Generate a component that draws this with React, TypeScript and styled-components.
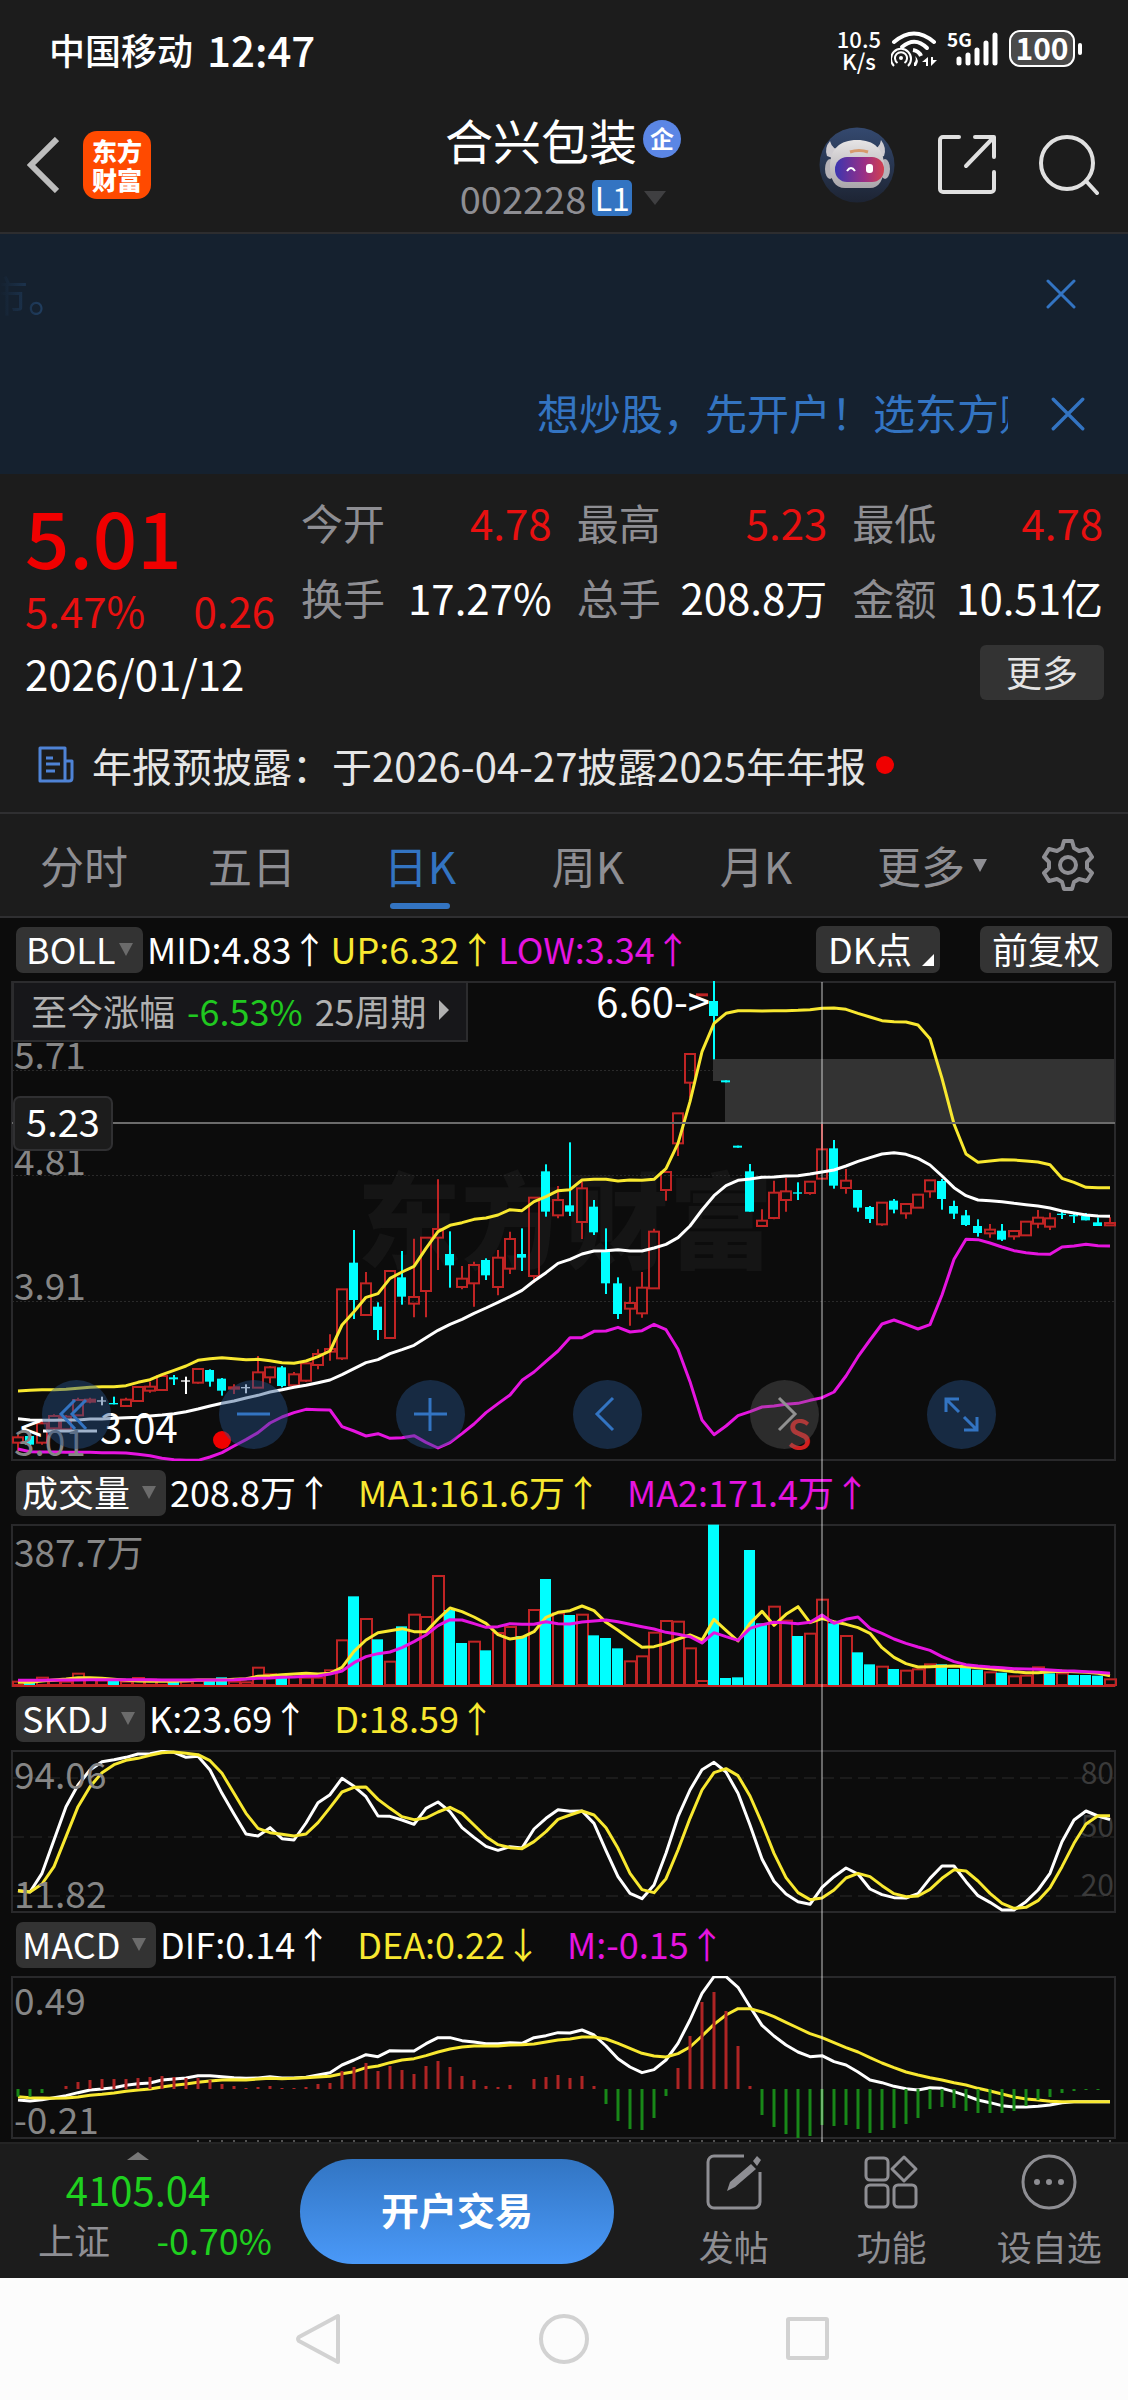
import React from "react";
import styled, { createGlobalStyle, css } from "styled-components";

const RED = "#e81010";
const BLUE = "#3374c2";
const YELLOW = "#f8e830";
const MAGENTA = "#e614e0";
const CYAN = "#00ffff";
const CANDLE_RED = "#c02424";
const GREY = "#8e8e93";
const FONT = `"Noto Sans CJK SC", "Noto Sans", sans-serif`;

const GlobalStyle = createGlobalStyle`
  * { box-sizing: border-box; }
  body { margin: 0; background: #1c1c1c; font-family: ${FONT}; color: #fff; }
  button, select, input { font: inherit; color: inherit; border: 0; padding: 0; background: none; }
  button { cursor: pointer; }
  h1, p, dl, dt, dd { margin: 0; font-weight: inherit; }
  svg { display: block; flex: none; }
`;

/* ---------- status bar ---------- */

const StatusBar = styled.div`
  display: flex;
  align-items: center;
  justify-content: space-between;
  height: 97px;
  padding: 0 46px 0 49px;
`;
const Carrier = styled.div`
  display: flex;
  align-items: center;
  gap: 14px;
  font-size: 36px;
  font-weight: 500;
  line-height: 48px;
`;
const Clock = styled.time`
  font-size: 42px;
`;
const StatusIcons = styled.div`
  display: flex;
  align-items: center;
  gap: 10px;
`;
const Speed = styled.div`
  font-size: 22px;
  font-weight: 500;
  line-height: 22px;
  text-align: center;
`;
const Battery = styled.div`
  display: flex;
  align-items: center;
  gap: 3px;
  &::after {
    content: "";
    width: 4px;
    height: 12px;
    border-radius: 2px;
    background: #fff;
  }
`;
const BatteryLevel = styled.div`
  width: 66px;
  height: 37px;
  border: 2px solid #fff;
  border-radius: 11px;
  background: #4a4a4a;
  font-size: 30px;
  font-weight: 700;
  line-height: 30px;
  text-align: center;
`;

/* ---------- header ---------- */

const Header = styled.header`
  display: grid;
  grid-template-columns: 1fr auto 1fr;
  align-items: center;
  height: 137px;
  padding: 0 29px 0 27px;
  border-bottom: 2px solid #2d2d2f;
`;
const HeaderLeft = styled.div`
  display: flex;
  align-items: center;
  gap: 24px;
`;
const HeaderRight = styled.div`
  display: flex;
  align-items: center;
  justify-content: flex-end;
  gap: 43px;
`;
const Logo = styled.button`
  width: 68px;
  height: 68px;
  border-radius: 14px;
  background: #ff4a00;
  color: #fff;
  font-size: 25px;
  font-weight: 900;
  line-height: 29px;
`;
const Stock = styled.div`
  display: flex;
  flex-direction: column;
  align-items: center;
  gap: 8px;
`;
const StockName = styled.h1`
  display: flex;
  align-items: center;
  gap: 6px;
  font-size: 48px;
  line-height: 58px;
`;
const FirmBadge = styled.span`
  width: 38px;
  height: 38px;
  border-radius: 50%;
  background: #5b86e5;
  font-size: 24px;
  font-weight: 700;
  line-height: 36px;
  text-align: center;
`;
const StockCode = styled.button`
  display: flex;
  align-items: center;
  gap: 6px;
  color: ${GREY};
  font-size: 38px;
  line-height: 44px;
  svg { margin-left: 6px; }
`;
const Level = styled.span`
  width: 40px;
  height: 36px;
  border-radius: 5px;
  background: ${BLUE};
  color: #fff;
  font-size: 32px;
  line-height: 34px;
  text-align: center;
`;

/* ---------- banner ---------- */

const Banner = styled.section`
  background: #15212f;
  color: ${BLUE};
`;
const BannerRow = styled.div<{ $inset: number }>`
  display: flex;
  align-items: center;
  justify-content: space-between;
  height: 120px;
  padding-right: ${(p) => p.$inset}px;
`;
const FadedText = styled.span`
  display: flex;
  justify-content: flex-end;
  width: 70px;
  overflow: hidden;
  white-space: nowrap;
  font-size: 42px;
  line-height: 60px;
  color: transparent;
  background: linear-gradient(90deg, #15212f, #27507f);
  background-clip: text;
  -webkit-background-clip: text;
`;
const Marquee = styled.a`
  width: 471px;
  margin-left: auto;
  margin-right: 43px;
  overflow: hidden;
  white-space: nowrap;
  color: inherit;
  text-decoration: none;
  font-size: 42px;
  line-height: 60px;
  padding-bottom: 4px;
`;

/* ---------- quote ---------- */

const Quote = styled.section`
  display: grid;
  grid-template-columns: 250px 1fr;
  column-gap: 26px;
  padding: 10px 25px 0;
  font-size: 42px;
`;
const Price = styled.p`
  color: #f00000;
  font-size: 78px;
  font-weight: 500;
  line-height: 102px;
`;
const Change = styled.p`
  display: flex;
  justify-content: space-between;
  color: ${RED};
  line-height: 48px;
`;
const Stats = styled.dl`
  display: grid;
  grid-template-columns: repeat(3, 1fr);
  column-gap: 25px;
  line-height: 75px;
`;
const Stat = styled.div`
  display: flex;
  justify-content: space-between;
  white-space: nowrap;
`;
const StatName = styled.dt`
  color: ${GREY};
`;
const StatValue = styled.dd<{ $up?: boolean }>`
  color: ${(p) => (p.$up ? RED : "#fff")};
`;
const DateRow = styled.div`
  display: flex;
  align-items: center;
  justify-content: space-between;
  padding: 11px 24px 0 25px;
  font-size: 42px;
  line-height: 54px;
`;
const MoreButton = styled.button`
  width: 124px;
  height: 55px;
  padding-bottom: 4px;
  border-radius: 6px;
  background: #333;
  color: #e4e4e4;
  font-size: 36px;
  line-height: 48px;
`;
const Notice = styled.a`
  display: flex;
  align-items: center;
  height: 114px;
  padding: 17px 38px 0;
  color: #e6e6e6;
  text-decoration: none;
  font-size: 40px;
  line-height: 52px;
  border-bottom: 2px solid #2f2f31;
  white-space: nowrap;
`;
const NoticeText = styled.span`
  margin: 0 10px 0 18px;
`;
const Dot = styled.span`
  width: 18px;
  height: 18px;
  border-radius: 50%;
  background: #f00000;
`;

/* ---------- tabs ---------- */

const Tabs = styled.nav`
  display: grid;
  grid-template-columns: repeat(6, 168fr) 120fr;
  height: 104px;
  border-bottom: 2px solid #2f2f31;
`;
const Tab = styled.button<{ $active?: boolean; $menu?: boolean }>`
  position: relative;
  display: flex;
  align-items: center;
  justify-content: center;
  gap: 8px;
  padding-left: ${(p) => (p.$menu ? 16 : 0)}px;
  color: ${(p) => (p.$active ? BLUE : GREY)};
  font-size: 44px;
  line-height: 60px;
  ${(p) =>
    p.$active &&
    css`
      &::after {
        content: "";
        position: absolute;
        bottom: 7px;
        width: 60px;
        height: 6px;
        border-radius: 3px;
        background: ${BLUE};
      }
    `}
`;

/* ---------- charts ---------- */

const Charts = styled.main`
  position: relative;
  background: #0c0c0c;
`;
const Crosshair = styled.div`
  position: absolute;
  top: 64px;
  bottom: 0;
  left: 72.75%;
  width: 2px;
  background: rgba(255, 255, 255, 0.38);
  pointer-events: none;
`;
const Legend = styled.div`
  display: flex;
  align-items: center;
  height: 63px;
  padding: 0 16px;
  font-size: 36px;
  line-height: 42px;
  white-space: nowrap;
`;
const Picker = styled.label<{ $tight?: boolean }>`
  position: relative;
  display: flex;
  align-items: center;
  margin-right: 4px;
  select {
    appearance: none;
    height: 46px;
    padding: ${(p) => (p.$tight ? "0 27px 4px 10px" : "0 35px 4px 6px")};
    border-radius: 7px;
    background: #333;
  }
  svg {
    position: absolute;
    right: 10px;
    pointer-events: none;
  }
`;
const Reading = styled.span<{ $color: string; $gap: number }>`
  color: ${(p) => p.$color};
  margin-right: ${(p) => p.$gap}px;
  padding-bottom: 4px;
`;
const LegendTools = styled.div`
  display: flex;
  gap: 40px;
  margin-left: auto;
`;
const ToolButton = styled.button`
  display: flex;
  align-items: center;
  justify-content: center;
  height: 47px;
  padding: 0 12px 4px;
  gap: 10px;
  border-radius: 7px;
  background: #333;
  svg { align-self: flex-end; margin: 0 -6px 3px 0; }
`;
const Plot = styled.div`
  position: relative;
`;
const Canvas = styled.svg`
  width: 100%;
  height: auto;
  font-family: ${FONT};
`;
const RangeNote = styled.button`
  position: absolute;
  top: 0;
  left: 12px;
  display: flex;
  align-items: center;
  gap: 12px;
  height: 61px;
  padding: 0 17px 4px;
  border: 2px solid #2c2c2e;
  background: #17171a;
  color: #b0b0b0;
  font-size: 36px;
  line-height: 48px;
  white-space: nowrap;
`;
const Fall = styled.span`
  color: #20c820;
`;
const CursorPrice = styled.output`
  position: absolute;
  top: 24%;
  left: 13px;
  width: 100px;
  height: 55px;
  border: 2px solid #303032;
  border-radius: 7px;
  background: #1c1c1c;
  font-size: 38px;
  line-height: 46px;
  text-align: center;
`;
const ControlBar = styled.div`
  position: absolute;
  left: 3.7%;
  right: 11.7%;
  bottom: 12px;
  display: flex;
  justify-content: space-between;
`;
const RoundButton = styled.button<{ $muted?: boolean }>`
  display: flex;
  align-items: center;
  justify-content: center;
  width: 69px;
  height: 69px;
  border-radius: 50%;
  background: ${(p) => (p.$muted ? "rgba(110, 110, 110, 0.33)" : "rgba(38, 82, 136, 0.44)")};
  color: ${(p) => (p.$muted ? "#919191" : BLUE)};
`;

/* ---------- bottom ---------- */

const BottomBar = styled.footer`
  display: grid;
  grid-template-columns: 300px 314px 1fr;
  height: 136px;
  border-top: 2px solid #242424;
`;
const IndexButton = styled.button`
  display: flex;
  flex-direction: column;
  align-items: center;
  padding: 8px 62px 0 38px;
  color: #1fd01f;
  font-size: 36px;
  line-height: 48px;
`;
const IndexValue = styled.span`
  font-size: 40px;
  line-height: 52px;
  padding-top: 3px;
`;
const IndexRow = styled.span`
  display: flex;
  justify-content: space-between;
  align-self: flex-start;
  width: 234px;
  margin-right: -34px;
`;
const IndexName = styled.span`
  color: ${GREY};
`;
const TradeButton = styled.button`
  align-self: center;
  height: 105px;
  padding-bottom: 4px;
  border-radius: 53px;
  background: linear-gradient(#3275c3, #4a99f8);
  font-size: 38px;
  font-weight: 700;
  line-height: 56px;
`;
const Actions = styled.div`
  display: grid;
  grid-template-columns: repeat(3, 1fr);
  padding-left: 41px;
`;
const Action = styled.button`
  display: flex;
  flex-direction: column;
  align-items: center;
  gap: 12px;
  padding-top: 10px;
  color: ${GREY};
  font-size: 35px;
  line-height: 48px;
`;
const SystemNav = styled.nav`
  display: flex;
  justify-content: center;
  gap: 192px;
  height: 122px;
  background: #fcfcfc;
`;

/* ---------- icons ---------- */

const Caret = ({ w = 14, h = 13, color = "#6b6b6b" }) => (
  <svg width={w} height={h} viewBox="0 0 14 13" preserveAspectRatio="none" fill={color}>
    <path d="M0 0h14L7 13z" />
  </svg>
);

const Cross = ({ size }: { size: number }) => (
  <svg width={size} height={size} viewBox="0 0 30 30" stroke="currentColor" strokeWidth="3" strokeLinecap="round">
    <path d="M2 2l26 26M28 2L2 28" />
  </svg>
);

const WifiIcon = () => (
  <svg width="46" height="37" viewBox="0 0 46 37" fill="none" stroke="#fff" strokeWidth="4">
    <path d="M3 12Q23-5 43 12" strokeLinecap="round" />
    <path d="M11 17Q24 6 36 18" strokeLinecap="round" />
    <path d="M22 20q6 1 8 6" />
    <circle cx="10" cy="28" r="2" fill="#fff" stroke="none" />
    <path d="M6.500 33a6 6 0 1 1 7 0M3 36a10 10 0 1 1 14 0" strokeWidth="2" />
    <path d="M24 26q5 4 1 10h-2v-3q3-3 1-7zM37 27v9h-2v-4h-4zM40 27v9l6-6h-4v-3z" fill="#fff" stroke="none" />
  </svg>
);

const SignalIcon = () => (
  <svg width="52" height="38" viewBox="0 0 52 38" stroke="#fff" strokeWidth="5" strokeLinecap="round">
    <text x="0" y="17" fontSize="19" fontWeight="700" fill="#fff" stroke="none" fontFamily={FONT}>5G</text>
    <path d="M12 29v4M21 25v8M30 20v13M39 13v20M48 5v28" />
  </svg>
);

const RobotIcon = () => (
  <svg width="76" height="76" viewBox="0 0 76 76">
    <defs>
      <linearGradient id="orb" x1="0" y1="0" x2="0" y2="1">
        <stop offset="0" stopColor="#34496f" />
        <stop offset="1" stopColor="#1d2433" />
      </linearGradient>
      <linearGradient id="visor" x1="0" y1="0" x2="1" y2="0">
        <stop offset="0" stopColor="#3a35b0" />
        <stop offset="0.6" stopColor="#9a2f86" />
        <stop offset="1" stopColor="#d2414f" />
      </linearGradient>
      <linearGradient id="shell" x1="0" y1="0" x2="0" y2="1">
        <stop offset="0" stopColor="#e6e4e5" />
        <stop offset="1" stopColor="#a9a5aa" />
      </linearGradient>
    </defs>
    <circle cx="38" cy="38" r="37.500" fill="url(#orb)" />
    <path d="M11 14q-6 7-3 15l8 3 6-8q-9-2-11-10zM62 13q6 8 3 16l-7 3-6-8q9-3 10-11z" fill="#cfccd1" />
    <ellipse cx="11" cy="42" rx="5" ry="10" fill="#b5b2b8" />
    <ellipse cx="66" cy="42" rx="5" ry="10" fill="#b5b2b8" />
    <path d="M38 13c17 0 27 9 27 26 0 14-5 22-14 22H26c-10 0-15-8-15-22 0-17 10-26 27-26z" fill="url(#shell)" />
    <rect x="16" y="30" width="49" height="25" rx="12" fill="url(#visor)" />
    <path d="M31 25q9-3 18 0" stroke="#d69a6c" strokeWidth="3" fill="none" />
    <path d="M28 44q4-6 8 0" stroke="#fff" strokeWidth="2" fill="none" />
    <rect x="47" y="37" width="7" height="9" rx="3" fill="#fff" />
  </svg>
);

const ShareIcon = () => (
  <svg width="58" height="59" viewBox="0 0 58 59" fill="none" stroke="#e0e0e0" strokeWidth="4" strokeLinecap="round" strokeLinejoin="round">
    <path d="M21 2H5a3 3 0 0 0-3 3v49a3 3 0 0 0 3 3h48a3 3 0 0 0 3-3V37M37 2h19v20M55 3L28 31" />
  </svg>
);

const SearchIcon = () => (
  <svg width="60" height="60" viewBox="0 0 60 60" fill="none" stroke="#e0e0e0" strokeWidth="4" strokeLinecap="round">
    <circle cx="28" cy="28" r="26" />
    <path d="M47 46l11 12" />
  </svg>
);

const DocIcon = () => (
  <svg width="36" height="37" viewBox="0 0 36 37" fill="none" stroke="#4f83d6" strokeWidth="3" strokeLinejoin="round">
    <path d="M2 2h25v33H2zM27 15h7v17q0 3-3 3h-6M8 12h7M8 18h14M8 25h9" />
  </svg>
);

const GearIcon = () => (
  <svg width="52" height="52" viewBox="0 0 52 52" fill="none" stroke={GREY} strokeWidth="4" strokeLinejoin="round">
    <path d="M22 2h8l2 7 5 3 8-2 5 8-5 5v6l5 5-5 8-8-2-5 3-2 7h-8l-2-7-5-3-8 2-5-8 5-5v-6l-5-5 5-8 8 2 5-3z" />
    <circle cx="26" cy="26" r="8" />
  </svg>
);

/* ---------- series: one entry per trading day, in thirds of a pixel ---------- */

// [body top, body bottom, wick top, wick bottom, kind]
type Candle = [number, number, number, number, "r" | "c" | "w"];
const candles: Candle[] = [
  [1402, 1418, 1395, 1450, "r"], [1398, 1424, 1390, 1430, "c"], [1360, 1418, 1352, 1424, "r"], [1338, 1375, 1333, 1382, "r"],
  [1340, 1378, 1335, 1384, "r"], [1290, 1336, 1283, 1336, "r"], [1289, 1295, 1283, 1300, "r"], [1291, 1295, 1280, 1306, "w"],
  [1299, 1303, 1280, 1303, "c"], [1289, 1308, 1283, 1308, "r"], [1251, 1293, 1248, 1296, "r"], [1250, 1262, 1235, 1268, "r"],
  [1218, 1260, 1218, 1260, "r"], [1222, 1228, 1215, 1245, "c"], [1231, 1235, 1220, 1272, "w"], [1197, 1238, 1195, 1241, "r"],
  [1200, 1235, 1198, 1250, "c"], [1226, 1262, 1224, 1277, "c"], [1252, 1256, 1243, 1272, "r"], [1251, 1255, 1243, 1270, "w"],
  [1207, 1253, 1158, 1253, "r"], [1192, 1222, 1188, 1240, "r"], [1192, 1248, 1188, 1252, "c"], [1213, 1246, 1206, 1248, "r"],
  [1180, 1232, 1180, 1236, "r"], [1152, 1185, 1138, 1198, "r"], [1137, 1145, 1093, 1172, "r"], [958, 1165, 958, 1170, "r"],
  [878, 990, 780, 1047, "c"], [940, 1035, 906, 1038, "r"], [1010, 1080, 997, 1110, "c"], [903, 1104, 903, 1106, "r"],
  [922, 980, 843, 1004, "c"], [981, 1001, 806, 1042, "r"], [803, 963, 803, 1042, "r"], [777, 803, 628, 900, "r"],
  [852, 886, 784, 953, "c"], [926, 951, 888, 958, "r"], [885, 940, 875, 1010, "r"], [870, 916, 865, 930, "c"],
  [863, 951, 840, 976, "r"], [807, 896, 785, 912, "r"], [852, 863, 775, 903, "c"], [683, 918, 683, 938, "r"],
  [604, 725, 583, 740, "c"], [690, 736, 648, 745, "r"], [706, 725, 517, 738, "c"], [655, 756, 635, 807, "r"],
  [710, 787, 690, 795, "c"], [843, 940, 775, 972, "c"], [940, 1032, 922, 1047, "c"], [999, 1016, 950, 1067, "r"],
  [953, 1030, 906, 1043, "r"], [785, 955, 776, 955, "r"], [606, 660, 606, 692, "r"], [430, 520, 430, 558, "r"],
  [252, 338, 252, 383, "r"], [73, 76, 73, 76, "r"], [93, 138, 33, 268, "c"], [331, 337, 331, 337, "c"],
  [527, 533, 527, 533, "c"], [604, 725, 582, 725, "c"], [752, 768, 718, 768, "r"], [668, 744, 632, 748, "r"],
  [664, 690, 623, 725, "r"], [667, 671, 637, 690, "c"], [635, 669, 635, 674, "r"], [538, 626, 460, 626, "r"],
  [535, 647, 510, 656, "c"], [632, 654, 597, 671, "r"], [660, 713, 660, 725, "c"], [711, 747, 708, 759, "c"],
  [698, 763, 698, 767, "r"], [692, 719, 687, 730, "c"], [702, 730, 702, 746, "r"], [674, 713, 674, 713, "r"],
  [631, 664, 631, 683, "r"], [633, 687, 627, 719, "c"], [708, 731, 692, 747, "c"], [736, 765, 720, 768, "c"],
  [768, 789, 748, 800, "c"], [779, 790, 762, 803, "r"], [782, 809, 762, 813, "c"], [783, 799, 783, 809, "r"],
  [755, 796, 755, 796, "r"], [743, 761, 720, 775, "r"], [745, 770, 728, 780, "r"], [731, 735, 723, 747, "c"],
  [735, 739, 731, 759, "c"], [738, 751, 729, 751, "c"], [757, 768, 742, 768, "c"], [759, 766, 742, 768, "r"],
];

const bollUp = [1263, 1261, 1259, 1259, 1258, 1255, 1252, 1250, 1250, 1247, 1237, 1229, 1214, 1201, 1188, 1171, 1166, 1163, 1166, 1169, 1168, 1172, 1178, 1180, 1173, 1160, 1143, 1065, 1025, 982, 971, 925, 906, 889, 835, 785, 766, 758, 748, 744, 735, 719, 722, 695, 680, 662, 659, 630, 628, 628, 633, 630, 631, 628, 596, 520, 395, 245, 160, 130, 122, 122, 123, 122, 122, 121, 119, 115, 114, 118, 130, 141, 152, 155, 156, 165, 206, 325, 462, 552, 577, 573, 569, 570, 573, 576, 584, 625, 637, 652, 653, 653];
const bollMid = [1346, 1350, 1351, 1351, 1350, 1350, 1347, 1347, 1345, 1343, 1342, 1338, 1335, 1331, 1325, 1317, 1308, 1300, 1293, 1284, 1276, 1266, 1259, 1252, 1246, 1238, 1230, 1214, 1196, 1178, 1169, 1151, 1139, 1126, 1103, 1081, 1063, 1048, 1030, 1014, 997, 980, 961, 933, 908, 880, 868, 852, 843, 842, 839, 843, 843, 834, 823, 803, 768, 720, 677, 647, 631, 627, 622, 621, 618, 617, 612, 606, 600, 588, 574, 563, 552, 548, 553, 565, 585, 618, 653, 677, 690, 692, 695, 700, 704, 708, 714, 723, 729, 735, 738, 739];
const bollLow = [1437, 1445, 1446, 1446, 1447, 1447, 1447, 1448, 1448, 1449, 1453, 1457, 1465, 1469, 1471, 1471, 1461, 1448, 1428, 1409, 1388, 1359, 1341, 1328, 1318, 1319, 1320, 1370, 1383, 1398, 1391, 1405, 1403, 1397, 1417, 1434, 1418, 1391, 1362, 1328, 1301, 1275, 1231, 1206, 1174, 1143, 1103, 1103, 1084, 1083, 1072, 1086, 1082, 1063, 1079, 1138, 1235, 1350, 1394, 1368, 1337, 1325, 1311, 1308, 1303, 1300, 1291, 1283, 1266, 1218, 1160, 1110, 1062, 1050, 1063, 1077, 1064, 975, 868, 808, 809, 819, 831, 842, 848, 852, 853, 831, 828, 823, 827, 828];

const volumeTops = [662, 668, 650, 660, 662, 638, 656, 658, 660, 662, 651, 656, 658, 662, 662, 660, 662, 652, 662, 664, 620, 640, 652, 648, 650, 650, 628, 538, 409, 474, 538, 602, 499, 461, 468, 345, 450, 549, 542, 571, 516, 498, 528, 447, 357, 457, 465, 461, 526, 534, 565, 601, 586, 515, 480, 482, 562, 660, 194, 654, 652, 270, 490, 437, 479, 528, 518, 416, 490, 525, 577, 613, 617, 627, 629, 625, 610, 613, 627, 621, 629, 634, 638, 646, 644, 619, 640, 637, 645, 645, 647, 655];
const volumeDown = new Set([1, 8, 13, 16, 17, 22, 28, 30, 32, 36, 37, 39, 42, 44, 46, 48, 49, 50, 58, 59, 60, 61, 62, 65, 68, 70, 71, 73, 77, 78, 79, 80, 82, 86, 88, 89, 90]);
const volMa1 = [667, 667, 663, 660, 657, 653, 653, 655, 658, 661, 663, 664, 664, 664, 662, 660, 660, 660, 658, 656, 649, 647, 644, 642, 640, 642, 640, 622, 574, 540, 518, 512, 506, 515, 515, 477, 444, 455, 471, 490, 524, 537, 532, 515, 472, 457, 452, 438, 452, 487, 511, 537, 562, 560, 550, 537, 525, 540, 478, 511, 543, 490, 454, 496, 463, 440, 488, 476, 485, 493, 503, 520, 563, 592, 611, 621, 620, 619, 618, 620, 623, 626, 631, 635, 638, 638, 635, 634, 635, 637, 640, 647];
const volMa2 = [661, 661, 661, 660, 660, 660, 659, 659, 659, 659, 659, 659, 660, 660, 660, 660, 660, 660, 659, 657, 655, 654, 652, 651, 649, 648, 642, 633, 608, 590, 581, 576, 563, 545, 525, 497, 479, 480, 491, 502, 500, 491, 493, 493, 485, 491, 492, 486, 483, 480, 485, 493, 500, 507, 517, 523, 530, 549, 518, 530, 541, 505, 494, 487, 488, 491, 487, 465, 490, 478, 471, 505, 520, 537, 550, 561, 571, 590, 605, 614, 618, 621, 623, 626, 627, 628, 630, 632, 633, 635, 637, 640];

const skdjK = [1292, 1296, 1240, 1140, 1040, 975, 930, 905, 899, 892, 882, 881, 874, 877, 892, 889, 930, 1000, 1062, 1122, 1128, 1103, 1136, 1140, 1089, 1028, 1004, 955, 979, 1010, 1068, 1069, 1080, 1093, 1045, 1026, 1055, 1103, 1132, 1159, 1171, 1160, 1164, 1107, 1075, 1049, 1054, 1053, 1090, 1172, 1250, 1300, 1316, 1275, 1180, 1070, 990, 929, 907, 936, 1000, 1095, 1197, 1264, 1302, 1325, 1333, 1282, 1250, 1224, 1242, 1287, 1304, 1313, 1314, 1301, 1255, 1218, 1218, 1265, 1307, 1327, 1350, 1350, 1325, 1290, 1240, 1145, 1080, 1053, 1068, 1079];
const skdjD = [1292, 1296, 1272, 1220, 1130, 1040, 980, 938, 914, 901, 895, 886, 878, 876, 880, 884, 902, 940, 1000, 1060, 1105, 1118, 1123, 1128, 1122, 1088, 1043, 996, 982, 981, 1018, 1045, 1070, 1079, 1074, 1056, 1042, 1060, 1095, 1130, 1154, 1163, 1166, 1145, 1115, 1078, 1065, 1053, 1065, 1103, 1165, 1240, 1289, 1298, 1256, 1170, 1075, 990, 938, 926, 947, 1008, 1090, 1180, 1253, 1298, 1319, 1314, 1290, 1254, 1240, 1250, 1277, 1301, 1310, 1308, 1288, 1255, 1229, 1233, 1263, 1300, 1330, 1345, 1342, 1322, 1283, 1220, 1150, 1092, 1067, 1067];

const macdDif = [600, 603, 599, 593, 587, 578, 570, 567, 563, 556, 551, 549, 540, 537, 534, 527, 527, 530, 533, 535, 534, 530, 534, 534, 532, 525, 518, 495, 480, 464, 470, 452, 453, 453, 431, 413, 413, 422, 426, 431, 431, 428, 430, 413, 407, 398, 399, 390, 405, 438, 476, 501, 518, 509, 480, 430, 360, 280, 230, 230, 262, 320, 376, 408, 435, 456, 470, 467, 485, 495, 516, 540, 548, 559, 566, 570, 563, 565, 575, 587, 600, 608, 617, 621, 621, 619, 615, 608, 605, 605, 605, 605];
const macdDea = [590, 593, 594, 595, 594, 591, 586, 583, 579, 574, 570, 567, 561, 556, 552, 547, 543, 540, 539, 540, 537, 535, 536, 535, 533, 531, 529, 521, 515, 503, 498, 488, 480, 476, 467, 456, 447, 441, 438, 438, 438, 435, 434, 432, 426, 420, 417, 411, 411, 417, 430, 445, 460, 468, 471, 461, 441, 408, 373, 345, 326, 326, 336, 350, 367, 384, 401, 413, 428, 443, 456, 473, 489, 503, 516, 525, 533, 540, 548, 555, 565, 573, 582, 591, 597, 600, 604, 605, 605, 605, 605, 605];
const macdBars = [590, 590, 579, 567, 558, 546, 540, 537, 537, 537, 534, 531, 528, 531, 534, 534, 540, 552, 558, 564, 561, 558, 564, 564, 561, 552, 549, 513, 501, 489, 513, 498, 510, 522, 498, 483, 501, 528, 540, 558, 561, 555, 567, 537, 531, 525, 534, 528, 558, 612, 663, 687, 690, 654, 588, 504, 408, 306, 276, 333, 438, 558, 645, 681, 702, 714, 708, 675, 678, 675, 687, 699, 690, 684, 672, 654, 627, 621, 624, 633, 639, 639, 639, 633, 618, 600, 591, 579, 573, 570, 570, 567];

const STEP = 12;
const dayX = (i: number) => 18 + STEP * i;

const Series = ({ data, top, color, width = 3 }: { data: number[]; top: number; color: string; width?: number }) => (
  <polyline
    fill="none"
    stroke={color}
    strokeWidth={width}
    strokeLinejoin="round"
    points={data.map((v, i) => `${dayX(i)},${(v - top) / 3}`).join(" ")}
  />
);

const Frame = ({ height }: { height: number }) => (
  <rect x="12" y="1" width="1103" height={height - 2} fill="none" stroke="#29292b" strokeWidth="2" />
);

const AxisLabel = ({ y, children }: { y: number; children: string }) => (
  <text x="14" y={y} fontSize="37" fill="#868686">{children}</text>
);

const PriceChart = () => {
  const y = (v: number) => (v - 33) / 3;
  return (
    <Canvas viewBox="0 0 1128 480" role="img" aria-label="日K线">
      <text x="357" y="280" fontSize="104" fontWeight="900" fill="#151515">东方财富</text>
      <g stroke="#2a2a2a" strokeDasharray="2 2">
        <path d="M12 89.500H1115M12 194.500H1115M12 320.500H1115" />
      </g>
      <path d="M713 78H1115V142H725V100H713z" fill="#333" />
      <Frame height={480} />
      {candles.map(([top, bottom, high, low, kind], i) => {
        const x = dayX(i);
        if (kind === "r") {
          const h = (bottom - top) / 3;
          return (
            <g key={i} stroke={CANDLE_RED} strokeWidth="2" fill="none">
              <path d={`M${x} ${y(high)}V${y(top)}M${x} ${y(bottom)}V${y(low)}`} />
              <rect x={x - 5} y={y(top)} width="10" height={h} />
            </g>
          );
        }
        const color = kind === "c" ? CYAN : "#fff";
        return (
          <g key={i} fill={color}>
            <rect x={x - 1} y={y(high)} width="2" height={(low - high) / 3} />
            <rect x={x - 5} y={y(top)} width="9" height={(bottom - top) / 3} />
          </g>
        );
      })}
      <Series data={bollUp} top={33} color={YELLOW} />
      <Series data={bollMid} top={33} color="#fff" />
      <Series data={bollLow} top={33} color={MAGENTA} />
      <path d="M12 142H1115" stroke="#6c6c6c" strokeWidth="2" />
      <g fontSize="40" fill="#fff">
        <text x="710" y="36" textAnchor="end">6.60-&gt;</text>
        <text x="20" y="462">&lt;</text>
        <text x="100" y="462">3.04</text>
      </g>
      <path d="M43 450H97" stroke="#fff" strokeWidth="3" />
      <AxisLabel y={88}>5.71</AxisLabel>
      <AxisLabel y={194}>4.81</AxisLabel>
      <AxisLabel y={319}>3.91</AxisLabel>
      <AxisLabel y={475}>3.01</AxisLabel>
      <circle cx="222" cy="459" r="9" fill="#f00000" />
      <text x="787" y="468" fontSize="40" fontWeight="500" fill="#d02020">S</text>
    </Canvas>
  );
};

const VolumeChart = () => (
  <Canvas viewBox="0 0 1128 163" role="img" aria-label="成交量">
    <Frame height={163} />
    <AxisLabel y={43}>387.7万</AxisLabel>
    {volumeTops.map((v, i) => {
      const top = (v - 192) / 3;
      return volumeDown.has(i) ? (
        <rect key={i} x={dayX(i) - 6} y={top} width="11" height={161 - top} fill={CYAN} />
      ) : (
        <rect key={i} x={dayX(i) - 5} y={top + 1} width="11" height={160 - top} fill="none" stroke={CANDLE_RED} strokeWidth="2" />
      );
    })}
    <path d="M12 162H1115" stroke={CANDLE_RED} strokeWidth="2" />
    <Series data={volMa1} top={192} color={YELLOW} />
    <Series data={volMa2} top={192} color={MAGENTA} />
  </Canvas>
);

const SkdjChart = () => (
  <Canvas viewBox="0 0 1128 163" role="img" aria-label="SKDJ">
    <Frame height={163} />
    <path d="M12 28H1115M12 87H1115M12 146H1115" stroke="#2b2b2b" strokeDasharray="12 6" />
    <g fontSize="30" fill="#3a3a3a" textAnchor="end">
      <text x="1114" y="34">80</text>
      <text x="1114" y="87">50</text>
      <text x="1114" y="146">20</text>
    </g>
    <Series data={skdjK} top={870} color="#fff" />
    <Series data={skdjD} top={870} color={YELLOW} />
    <AxisLabel y={39}>94.06</AxisLabel>
    <AxisLabel y={158}>11.82</AxisLabel>
  </Canvas>
);

const MacdChart = () => (
  <Canvas viewBox="0 0 1128 166" role="img" aria-label="MACD">
    <Frame height={163} />
    <Series data={macdDif} top={228} color="#fff" />
    <Series data={macdDea} top={228} color={YELLOW} />
    {macdBars.map((v, i) => (
      <path key={i} d={`M${dayX(i)} 113V${(v - 228) / 3}`} stroke={v > 567 ? "#188818" : "#ae2424"} strokeWidth="3" />
    ))}
    <AxisLabel y={39}>0.49</AxisLabel>
    <AxisLabel y={158}>-0.21</AxisLabel>
    <path d="M197 165H1115" stroke="#9a9a9a" strokeDasharray="2 10" />
  </Canvas>
);

/* ---------- page data ---------- */

const stats = [
  { name: "今开", value: "4.78", up: true },
  { name: "最高", value: "5.23", up: true },
  { name: "最低", value: "4.78", up: true },
  { name: "换手", value: "17.27%" },
  { name: "总手", value: "208.8万" },
  { name: "金额", value: "10.51亿" },
];

type LegendValue = { text: string; color: string };
const IndicatorLegend = ({
  name,
  values,
  gap = 26,
  tight,
  children,
}: {
  name: string;
  values: LegendValue[];
  gap?: number;
  tight?: boolean;
  children?: React.ReactNode;
}) => (
  <Legend>
    <Picker $tight={tight}>
      <select aria-label="指标">
        <option>{name}</option>
      </select>
      <Caret />
    </Picker>
    {values.map((v) => (
      <Reading key={v.text} $color={v.color} $gap={gap}>{v.text}</Reading>
    ))}
    {children}
  </Legend>
);

const controls = [
  { label: "最早", d: "M17 4L3 18l14 15M28 4L14 18l14 15" },
  { label: "缩小", d: "M2 18H35" },
  { label: "放大", d: "M2 18H35M18 2V35" },
  { label: "向左", d: "M24 2L8 18l16 16" },
  { label: "向右", d: "M13 2l16 16-16 16", muted: true },
  { label: "全屏", d: "M16 3H3v13M3 3l13 13M21 21l13 13M34 21v13H21" },
];

export default function App() {
  return (
    <>
      <GlobalStyle />
      <StatusBar>
        <Carrier>
          <span>中国移动</span>
          <Clock>12:47</Clock>
        </Carrier>
        <StatusIcons>
          <Speed>10.5<br />K/s</Speed>
          <WifiIcon />
          <SignalIcon />
          <Battery><BatteryLevel>100</BatteryLevel></Battery>
        </StatusIcons>
      </StatusBar>

      <Header>
        <HeaderLeft>
          <button aria-label="返回">
            <svg width="32" height="56" viewBox="0 0 32 56" fill="none" stroke="#bdbdbd" strokeWidth="6">
              <path d="M30 2L4 28l26 26" />
            </svg>
          </button>
          <Logo>东方<br />财富</Logo>
        </HeaderLeft>
        <Stock>
          <StockName>合兴包装<FirmBadge>企</FirmBadge></StockName>
          <StockCode>
            002228<Level>L1</Level>
            <Caret w={22} h={14} color="#3f3f41" />
          </StockCode>
        </Stock>
        <HeaderRight>
          <button aria-label="助手"><RobotIcon /></button>
          <button aria-label="分享"><ShareIcon /></button>
          <button aria-label="搜索"><SearchIcon /></button>
        </HeaderRight>
      </Header>

      <Banner>
        <BannerRow $inset={52}>
          <FadedText>市。</FadedText>
          <button aria-label="关闭公告"><Cross size={30} /></button>
        </BannerRow>
        <BannerRow $inset={43}>
          <Marquee href="#open">想炒股，先开户！选东方财富</Marquee>
          <button aria-label="关闭广告"><Cross size={34} /></button>
        </BannerRow>
      </Banner>

      <Quote>
        <div>
          <Price>5.01</Price>
          <Change><span>5.47%</span><span>0.26</span></Change>
        </div>
        <Stats>
          {stats.map((s) => (
            <Stat key={s.name}>
              <StatName>{s.name}</StatName>
              <StatValue $up={s.up}>{s.value}</StatValue>
            </Stat>
          ))}
        </Stats>
      </Quote>
      <DateRow>
        <time>2026/01/12</time>
        <MoreButton>更多</MoreButton>
      </DateRow>
      <Notice href="#report">
        <DocIcon />
        <NoticeText>年报预披露：于2026-04-27披露2025年年报</NoticeText>
        <Dot />
      </Notice>

      <Tabs>
        <Tab>分时</Tab>
        <Tab>五日</Tab>
        <Tab $active>日K</Tab>
        <Tab>周K</Tab>
        <Tab>月K</Tab>
        <Tab $menu>更多<Caret color={GREY} /></Tab>
        <Tab aria-label="设置"><GearIcon /></Tab>
      </Tabs>

      <Charts>
        <IndicatorLegend
          name="BOLL"
          tight
          gap={3}
          values={[
            { text: "MID:4.83↑", color: "#fff" },
            { text: "UP:6.32↑", color: YELLOW },
            { text: "LOW:3.34↑", color: MAGENTA },
          ]}
        >
          <LegendTools>
            <ToolButton>
              DK点
              <svg width="12" height="12" viewBox="0 0 12 12"><path d="M12 0v12H0z" fill="#fff" /></svg>
            </ToolButton>
            <ToolButton>前复权</ToolButton>
          </LegendTools>
        </IndicatorLegend>
        <Plot>
          <PriceChart />
          <RangeNote>
            <span>至今涨幅</span>
            <Fall>-6.53%</Fall>
            <span>25周期</span>
            <svg width="10" height="20" viewBox="0 0 10 20" fill="#b0b0b0"><path d="M0 0l10 10L0 20z" /></svg>
          </RangeNote>
          <CursorPrice>5.23</CursorPrice>
          <ControlBar>
            {controls.map((c) => (
              <RoundButton key={c.label} aria-label={c.label} $muted={c.muted}>
                <svg width="37" height="37" viewBox="0 0 37 37" fill="none" stroke="currentColor" strokeWidth="3">
                  <path d={c.d} />
                </svg>
              </RoundButton>
            ))}
          </ControlBar>
        </Plot>

        <IndicatorLegend
          name="成交量"
          values={[
            { text: "208.8万↑", color: "#fff" },
            { text: "MA1:161.6万↑", color: YELLOW },
            { text: "MA2:171.4万↑", color: MAGENTA },
          ]}
        />
        <VolumeChart />

        <IndicatorLegend
          name="SKDJ"
          values={[
            { text: "K:23.69↑", color: "#fff" },
            { text: "D:18.59↑", color: YELLOW },
          ]}
        />
        <SkdjChart />

        <IndicatorLegend
          name="MACD"
          values={[
            { text: "DIF:0.14↑", color: "#fff" },
            { text: "DEA:0.22↓", color: YELLOW },
            { text: "M:-0.15↑", color: MAGENTA },
          ]}
        />
        <MacdChart />
        <Crosshair />
      </Charts>

      <BottomBar>
        <IndexButton>
          <svg width="22" height="8" viewBox="0 0 22 8" fill="#777"><path d="M11 0l11 8H0z" /></svg>
          <IndexValue>4105.04</IndexValue>
          <IndexRow><IndexName>上证</IndexName>-0.70%</IndexRow>
        </IndexButton>
        <TradeButton>开户交易</TradeButton>
        <Actions>
          <Action>
            <svg width="56" height="56" viewBox="0 0 56 56" fill="none" stroke={GREY} strokeWidth="3">
              <path d="M38 2H8a6 6 0 0 0-6 6v40a6 6 0 0 0 6 6h40a6 6 0 0 0 6-6V18" />
              <path d="M21 37l3-9L45 10l5 5-21 18zM47 7l4-5 4 4-4 6z" fill={GREY} stroke="none" />
            </svg>
            发帖
          </Action>
          <Action>
            <svg width="56" height="56" viewBox="0 0 56 56" fill="none" stroke={GREY} strokeWidth="3" strokeLinejoin="round">
              <rect x="3" y="4" width="22" height="22" rx="4" />
              <rect x="3" y="31" width="22" height="22" rx="4" />
              <rect x="31" y="31" width="22" height="22" rx="4" />
              <path d="M41 3l12 12-12 12-12-12z" />
            </svg>
            功能
          </Action>
          <Action>
            <svg width="56" height="56" viewBox="0 0 56 56" fill={GREY}>
              <circle cx="28" cy="28" r="26" fill="none" stroke={GREY} strokeWidth="3" />
              <circle cx="16" cy="28" r="3" />
              <circle cx="28" cy="28" r="3" />
              <circle cx="40" cy="28" r="3" />
            </svg>
            设自选
          </Action>
        </Actions>
      </BottomBar>

      <SystemNav>
        <button aria-label="系统返回">
          <svg width="52" height="52" viewBox="0 0 52 52" fill="none" stroke="#d2d2d2" strokeWidth="4" strokeLinejoin="round">
            <path d="M44 3v46L5 28q-2-2 0-4z" />
          </svg>
        </button>
        <button aria-label="主屏幕">
          <svg width="52" height="52" viewBox="0 0 52 52" fill="none" stroke="#d2d2d2" strokeWidth="4">
            <circle cx="26" cy="26" r="23" />
          </svg>
        </button>
        <button aria-label="最近任务">
          <svg width="52" height="52" viewBox="0 0 52 52" fill="none" stroke="#d2d2d2" strokeWidth="4" strokeLinejoin="round">
            <rect x="6" y="6" width="39" height="39" rx="1" />
          </svg>
        </button>
      </SystemNav>
    </>
  );
}
